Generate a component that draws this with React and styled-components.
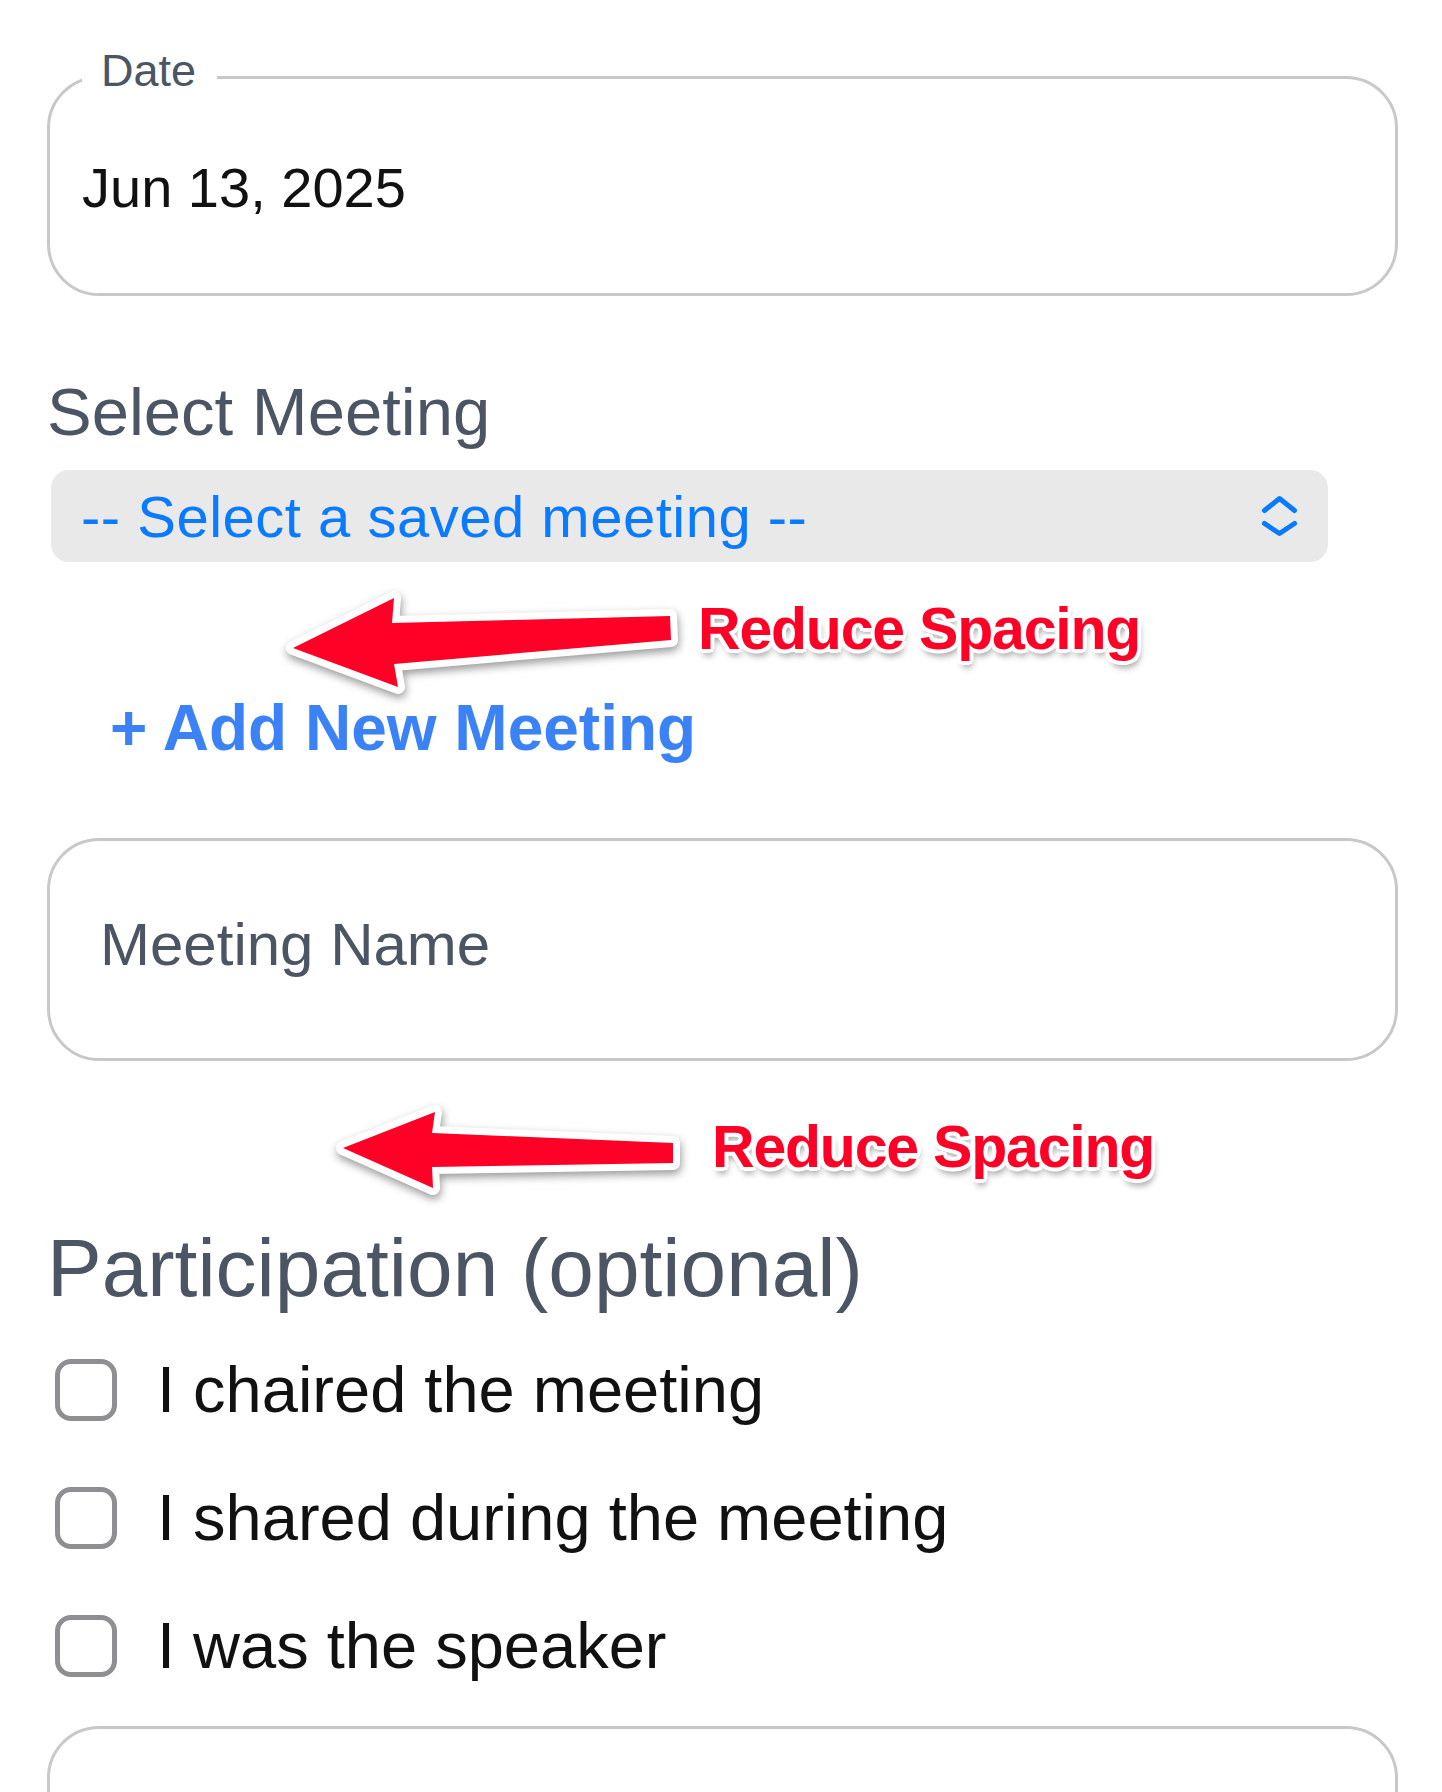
import styled, { createGlobalStyle } from "styled-components";

const GlobalStyle = createGlobalStyle`
  html, body {
    margin: 0;
    padding: 0;
    background: #ffffff;
  }
  body {
    font-family: "Liberation Sans", Arial, sans-serif;
    -webkit-font-smoothing: antialiased;
  }
`;

const Page = styled.div`
  position: relative;
  height: 1792px;
  overflow: hidden;
  padding: 48px 0 0 47px;
  box-sizing: border-box;
  display: flex;
  flex-direction: column;
  align-items: flex-start;

  & > * {
    flex-shrink: 0;
  }
`;

const Field = styled.fieldset`
  margin: 0;
  width: 1351px;
  box-sizing: border-box;
  border: 3px solid #c8c8c8;
  border-radius: 52px;
  padding: 0 32px;
`;

const Legend = styled.legend`
  padding: 0 21px 14px 19px;
  font-size: 45px;
  line-height: 45px;
  color: #4b5563;
`;

const Value = styled.div`
  padding: 46px 0 70px;
  font-size: 56px;
  line-height: 70px;
  color: #111111;
`;

const Label = styled.div`
  margin-top: 78px;
  font-size: 67px;
  line-height: 76px;
  color: #4b5563;
`;

const Select = styled.div`
  margin: 20px 0 0 4px;
  width: 1277px;
  height: 92px;
  box-sizing: border-box;
  padding: 0 28px 0 30px;
  border-radius: 18px;
  background: #e9e9ea;
  display: flex;
  align-items: center;
  justify-content: space-between;
  color: #0a7aff;
  font-size: 58px;
  letter-spacing: 0.5px;
`;

const AddLink = styled.div`
  margin: 128px 0 0 63px;
  font-size: 64px;
  line-height: 76px;
  font-weight: 700;
  color: #3b82f6;
`;

const InputBox = styled.div`
  margin-top: ${(p) => p.$top}px;
  width: 1351px;
  height: ${(p) => p.$height}px;
  box-sizing: border-box;
  border: 3px solid #c8c8c8;
  border-radius: 52px;
  padding: 68px 50px 0;
  font-size: 60px;
  line-height: 72px;
  color: #4b5563;
`;

const Heading = styled.div`
  margin-top: 162px;
  font-size: 82px;
  line-height: 90px;
  color: #4b5563;
`;

const CheckList = styled.div`
  margin-top: 42px;
  display: flex;
  flex-direction: column;
  gap: 58px;
`;

const CheckRow = styled.label`
  display: flex;
  align-items: center;
  height: 70px;
  gap: 40px;
  font-size: 65px;
  line-height: 70px;
  color: #111111;
`;

const Box = styled.span`
  margin-left: 8px;
  width: 62px;
  height: 62px;
  box-sizing: border-box;
  border: 5px solid #8e8e93;
  border-radius: 16px;
  flex-shrink: 0;
`;

const Arrow = styled.svg`
  position: absolute;
  left: ${(p) => p.$x}px;
  top: ${(p) => p.$y}px;
  overflow: visible;
  filter: drop-shadow(1px 4px 4px rgba(0, 0, 0, 0.4));
`;

const Note = styled.div`
  position: absolute;
  left: ${(p) => p.$x}px;
  top: ${(p) => p.$y}px;
  font-size: 59px;
  line-height: 59px;
  font-weight: 700;
  letter-spacing: -1.2px;
  color: #ff0026;
  white-space: nowrap;
  text-shadow: -3px -3px 0 #fff, 3px -3px 0 #fff, -3px 3px 0 #fff,
    3px 3px 0 #fff, 0 -4px 0 #fff, 0 4px 0 #fff, -4px 0 0 #fff, 4px 0 0 #fff,
    2px 6px 7px rgba(0, 0, 0, 0.45);
`;

const Chevrons = () => (
  <svg width="41" height="46" viewBox="1260 492 41 46">
    <path
      d="M1265.5 509.5 L1280.5 497.5 L1295.5 509.5 M1265.5 522.5 L1280.5 532.5 L1295.5 522.5"
      fill="none"
      stroke="#0a7aff"
      strokeWidth="5"
      strokeLinecap="round"
      strokeLinejoin="round"
    />
  </svg>
);

// annotation arrows, points in page coordinates
const arrows = [
  {
    x: 270,
    y: 575,
    w: 430,
    h: 135,
    points: "293,648 394,598 392,623 670,616 671,640 394,664 398,687",
  },
  {
    x: 320,
    y: 1090,
    w: 380,
    h: 120,
    points: "343,1148 435,1112 432,1133 673,1143 673,1163 432,1167 433,1188",
  },
];

const options = [
  "I chaired the meeting",
  "I shared during the meeting",
  "I was the speaker",
];

export default function App() {
  return (
    <>
      <GlobalStyle />
      <Page>
        <Field>
          <Legend>Date</Legend>
          <Value>Jun 13, 2025</Value>
        </Field>

        <Label>Select Meeting</Label>
        <Select role="combobox">
          <span>-- Select a saved meeting --</span>
          <Chevrons />
        </Select>

        <AddLink>+ Add New Meeting</AddLink>

        <InputBox $top={72} $height={223}>
          Meeting Name
        </InputBox>

        <Heading>Participation (optional)</Heading>
        <CheckList>
          {options.map((o) => (
            <CheckRow key={o}>
              <Box />
              {o}
            </CheckRow>
          ))}
        </CheckList>

        <InputBox $top={45} $height={240} />

        {arrows.map((a) => (
          <Arrow
            key={a.points}
            $x={a.x}
            $y={a.y}
            width={a.w}
            height={a.h}
            viewBox={`${a.x} ${a.y} ${a.w} ${a.h}`}
          >
            <polygon
              points={a.points}
              fill="#ff0026"
              stroke="#ffffff"
              strokeWidth="14"
              strokeLinejoin="round"
              paintOrder="stroke"
            />
          </Arrow>
        ))}
        <Note $x={698} $y={600}>
          Reduce Spacing
        </Note>
        <Note $x={712} $y={1118}>
          Reduce Spacing
        </Note>
      </Page>
    </>
  );
}
